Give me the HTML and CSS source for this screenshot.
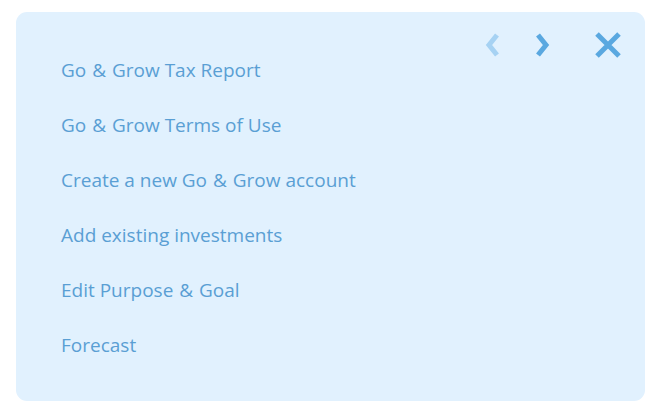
FILE: index.html
```html
<!DOCTYPE html>
<html lang="en">
<head>
    <meta charset="UTF-8">
    <meta name="viewport" content="width=device-width, initial-scale=1.0">
    <title>Go &amp; Grow</title>
    <link rel="stylesheet" href="styles.css">
</head>
<body>
    <div class="panel">
        <div class="controls">
            <button class="nav prev" aria-label="Previous">
                <svg width="18" height="26" viewBox="0 0 18 26"><path d="M13 3 L5 13 L13 23" fill="none" stroke="currentColor" stroke-width="5" stroke-linejoin="miter"/></svg>
            </button>
            <button class="nav next" aria-label="Next">
                <svg width="18" height="26" viewBox="0 0 18 26"><path d="M5 3 L13 13 L5 23" fill="none" stroke="currentColor" stroke-width="5" stroke-linejoin="miter"/></svg>
            </button>
            <button class="nav close" aria-label="Close">
                <svg width="28" height="26" viewBox="0 0 28 26"><path d="M3 2 L25 24 M25 2 L3 24" fill="none" stroke="currentColor" stroke-width="5"/></svg>
            </button>
        </div>
        <ul class="links">
            <li><a href="#">Go <span class="amp">&amp;</span> Grow Tax Report</a></li>
            <li><a href="#">Go <span class="amp">&amp;</span> Grow Terms of Use</a></li>
            <li><a href="#">Create a new Go <span class="amp">&amp;</span> Grow account</a></li>
            <li><a href="#">Add existing investments</a></li>
            <li><a href="#">Edit Purpose <span class="amp">&amp;</span> Goal</a></li>
            <li><a href="#">Forecast</a></li>
        </ul>
    </div>
</body>
</html>
```

FILE: styles.css
```css
body {
    font-family: "Open Sans", sans-serif;
    margin: 0;
    padding: 12px 11px 10px 16px;
    background-color: #ffffff;
}
.panel {
    position: relative;
    background-color: #e1f1fe;
    border-radius: 11px;
    height: 389px;
    box-sizing: border-box;
    padding: 46px 0 0 45px;
}
.controls {
    position: absolute;
    top: 20px;
    right: 23px;
    display: flex;
    gap: 31px;
}
.nav {
    background: none;
    border: none;
    padding: 0;
    cursor: pointer;
    color: #5aa8e0;
    display: flex;
}
.prev {
    color: #a6d2f3;
}
.close {
    margin-left: 12px;
}
.links {
    list-style: none;
    margin: 0;
    padding: 0;
}
.links li {
    height: 55px;
    line-height: 24px;
}
.links a {
    color: #5a9fd4;
    font-size: 19px;
    text-decoration: none;
}
.amp {
    margin: 0 1px;
}
```
